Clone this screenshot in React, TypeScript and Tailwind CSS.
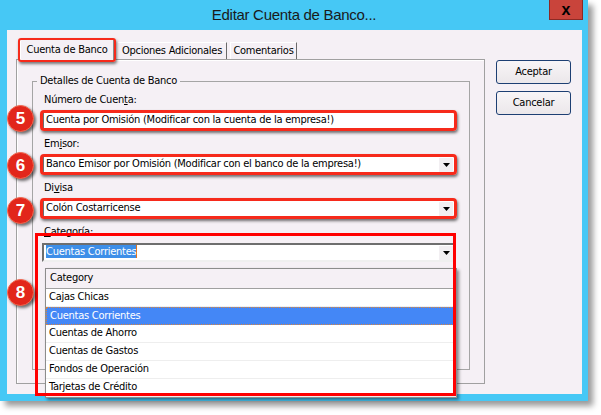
import React from "react";

const categories = [
  "Cajas Chicas",
  "Cuentas Corrientes",
  "Cuentas de Ahorro",
  "Cuentas de Gastos",
  "Fondos de Operación",
  "Tarjetas de Crédito",
];

const badges = [
  { n: "5", top: "top-[105px]" },
  { n: "6", top: "top-[152px]" },
  { n: "7", top: "top-[197px]" },
  { n: "8", top: "top-[279px]" },
];

const Highlight = () => (
  <span className="pointer-events-none absolute -left-[4px] -top-[3px] -right-[3px] -bottom-[3px] rounded-[4px] border-[3px] border-[#f62a1b] shadow-[1px_2px_3px_rgba(0,0,0,0.55)]" />
);

const Arrow = () => (
  <div className="ml-auto mr-[1px] flex h-[14px] w-[14px] shrink-0 items-center justify-center bg-[#f2eff2]">
    <svg width="7" height="4" viewBox="0 0 7 4">
      <path d="M0 0h7L3.5 4z" fill="#000" />
    </svg>
  </div>
);

const Box = ({ children, combo, mark }: { children: React.ReactNode; combo?: boolean; mark?: boolean }) => (
  <div className="relative ml-[9px] mt-[4px] flex h-[19px] w-[414px] items-center border-2 border-b-[#efefef] border-l-[#6e6e6e] border-r-[#efefef] border-t-[#6e6e6e] bg-white pl-[2px]">
    <span className="whitespace-nowrap">{children}</span>
    {combo && <Arrow />}
    {mark && <Highlight />}
  </div>
);

const Label = ({ children, first }: { children: React.ReactNode; first?: boolean }) => (
  <div className={`h-[14px] pl-[11px] leading-[14px] ${first ? "" : "mt-[7px]"}`}>{children}</div>
);

export default function App() {
  return (
    <div className="relative h-[415px] w-[601px] overflow-hidden whitespace-nowrap bg-white font-['DejaVu_Sans_Condensed','Liberation_Sans',Arial,sans-serif] text-[11px] tracking-[-0.25px] text-black">
      <div className="flex h-[401px] w-[588px] flex-col bg-[#46c8f5] shadow-[5px_5px_6px_rgba(0,0,0,0.4)]">
        {/* title bar */}
        <div className="relative flex h-[30px] items-center justify-center">
          <span className="font-['Liberation_Sans',Arial,sans-serif] text-[15px] tracking-[-0.3px] text-[#1a1a1a]">
            Editar Cuenta de Banco...
          </span>
          <div className="absolute right-[5px] top-0 flex h-[20px] w-[34px] items-center justify-center border border-t-0 border-[#8c2a25] bg-[#c9443b]">
            <span className="font-['Liberation_Sans',Arial,sans-serif] text-[16px] font-bold leading-none tracking-normal text-black">x</span>
          </div>
        </div>

        {/* client area */}
        <div className="mb-[7px] ml-[7px] mr-[6px] flex flex-1 bg-[#f5f0f5] pl-[9px] pt-[8px]">
          <div className="flex w-[469px] flex-col">
            {/* tabs */}
            <div className="relative z-10 flex h-[21px] items-end">
              <div className="relative -mb-[1px] ml-[4px] flex h-[21px] w-[94px] items-center justify-center border-l border-r border-t border-l-white border-r-[#8a8a8a] border-t-white bg-[#f5f0f5]">
                Cuenta de Banco
                <span className="pointer-events-none absolute -left-[3px] -top-[2px] -right-[3px] -bottom-[2px] rounded-[3px] border-[2.5px] border-[#f62a1b] shadow-[1px_2px_3px_rgba(0,0,0,0.5)]" />
              </div>
              <div className="ml-[4px] flex h-[17px] w-[109px] items-center justify-center border-r border-t border-r-[#6a6a6a] border-t-white">
                Opciones Adicionales
              </div>
              <div className="ml-[3px] flex h-[17px] w-[67px] items-center justify-center border-l border-r border-t border-l-white border-r-[#6a6a6a] border-t-white">
                Comentarios
              </div>
            </div>

            {/* tab page */}
            <div className="h-[325px] border border-[#a0a0a0] shadow-[inset_1px_1px_0_#fff]">
              <fieldset className="ml-[15px] mt-[14px] h-[296px] w-[438px] border border-[#a5a5a5]">
                <legend className="ml-[4px] px-[3px] leading-[14px]">Detalles de Cuenta de Banco</legend>
                <div className="flex flex-col pt-[5px]">
                  <Label first>
                    Número de Cuen<span className="underline">t</span>a:
                  </Label>
                  <Box mark>Cuenta por Omisión (Modificar con la cuenta de la empresa!)</Box>

                  <Label>
                    Em<span className="underline">i</span>sor:
                  </Label>
                  <Box combo mark>
                    Banco Emisor por Omisión (Modificar con el banco de la empresa!)
                  </Box>

                  <Label>
                    Di<span className="underline">v</span>isa
                  </Label>
                  <Box combo mark>
                    Colón Costarricense
                  </Box>

                  <Label>
                    <span className="underline">C</span>ategoría:
                  </Label>
                  <div className="relative">
                    <Box combo>
                      <span className="border-r border-[#e07020] bg-[#3d8ee8] text-white">Cuentas Corrientes</span>
                    </Box>

                    {/* open drop-down list */}
                    <div className="absolute left-[12px] top-[29px] z-20 w-[412px] border border-[#8c8c8c] bg-white shadow-[2px_2px_3px_rgba(0,0,0,0.45)]">
                      <div className="flex h-[20px] items-center border-b border-[#a0a0a0] bg-[#f5f0f5] pl-[4px]">Category</div>
                      {categories.map((c) => (
                        <div
                          key={c}
                          className={`flex h-[18px] items-center pl-[3px] ${
                            c === "Cuentas Corrientes"
                              ? "border border-dotted border-[#d9843f] bg-[#4487f6] text-white"
                              : "border-b border-[#eeeeee]"
                          }`}
                        >
                          {c}
                        </div>
                      ))}
                    </div>
                  </div>
                </div>
              </fieldset>
            </div>
          </div>

          {/* buttons */}
          <div className="ml-[11px] mt-[22px] flex w-[75px] flex-col gap-[7px]">
            <div className="flex h-[24px] items-center justify-center rounded-[3px] border border-[#1d3f73] bg-gradient-to-b from-[#f8f5f7] to-[#ebe7ea]">
              Aceptar
            </div>
            <div className="flex h-[24px] items-center justify-center rounded-[3px] border border-[#1d3f73] bg-gradient-to-b from-[#f8f5f7] to-[#ebe7ea]">
              Cancelar
            </div>
          </div>
        </div>
      </div>

      {/* annotation 8 frame */}
      <div className="pointer-events-none absolute left-[35px] top-[233px] z-30 h-[163px] w-[421px] border-[3px] border-[#ff0000]" />

      {/* numbered badges */}
      {badges.map((b) => (
        <div
          key={b.n}
          className={`absolute left-[7px] ${b.top} z-30 flex h-[27px] w-[27px] items-center justify-center rounded-full border border-[#f2674f] bg-[#e2261b] font-['Liberation_Sans',Arial,sans-serif] text-[17px] font-bold tracking-normal text-white shadow-[2px_2px_3px_rgba(0,0,0,0.55)]`}
        >
          {b.n}
        </div>
      ))}
    </div>
  );
}
